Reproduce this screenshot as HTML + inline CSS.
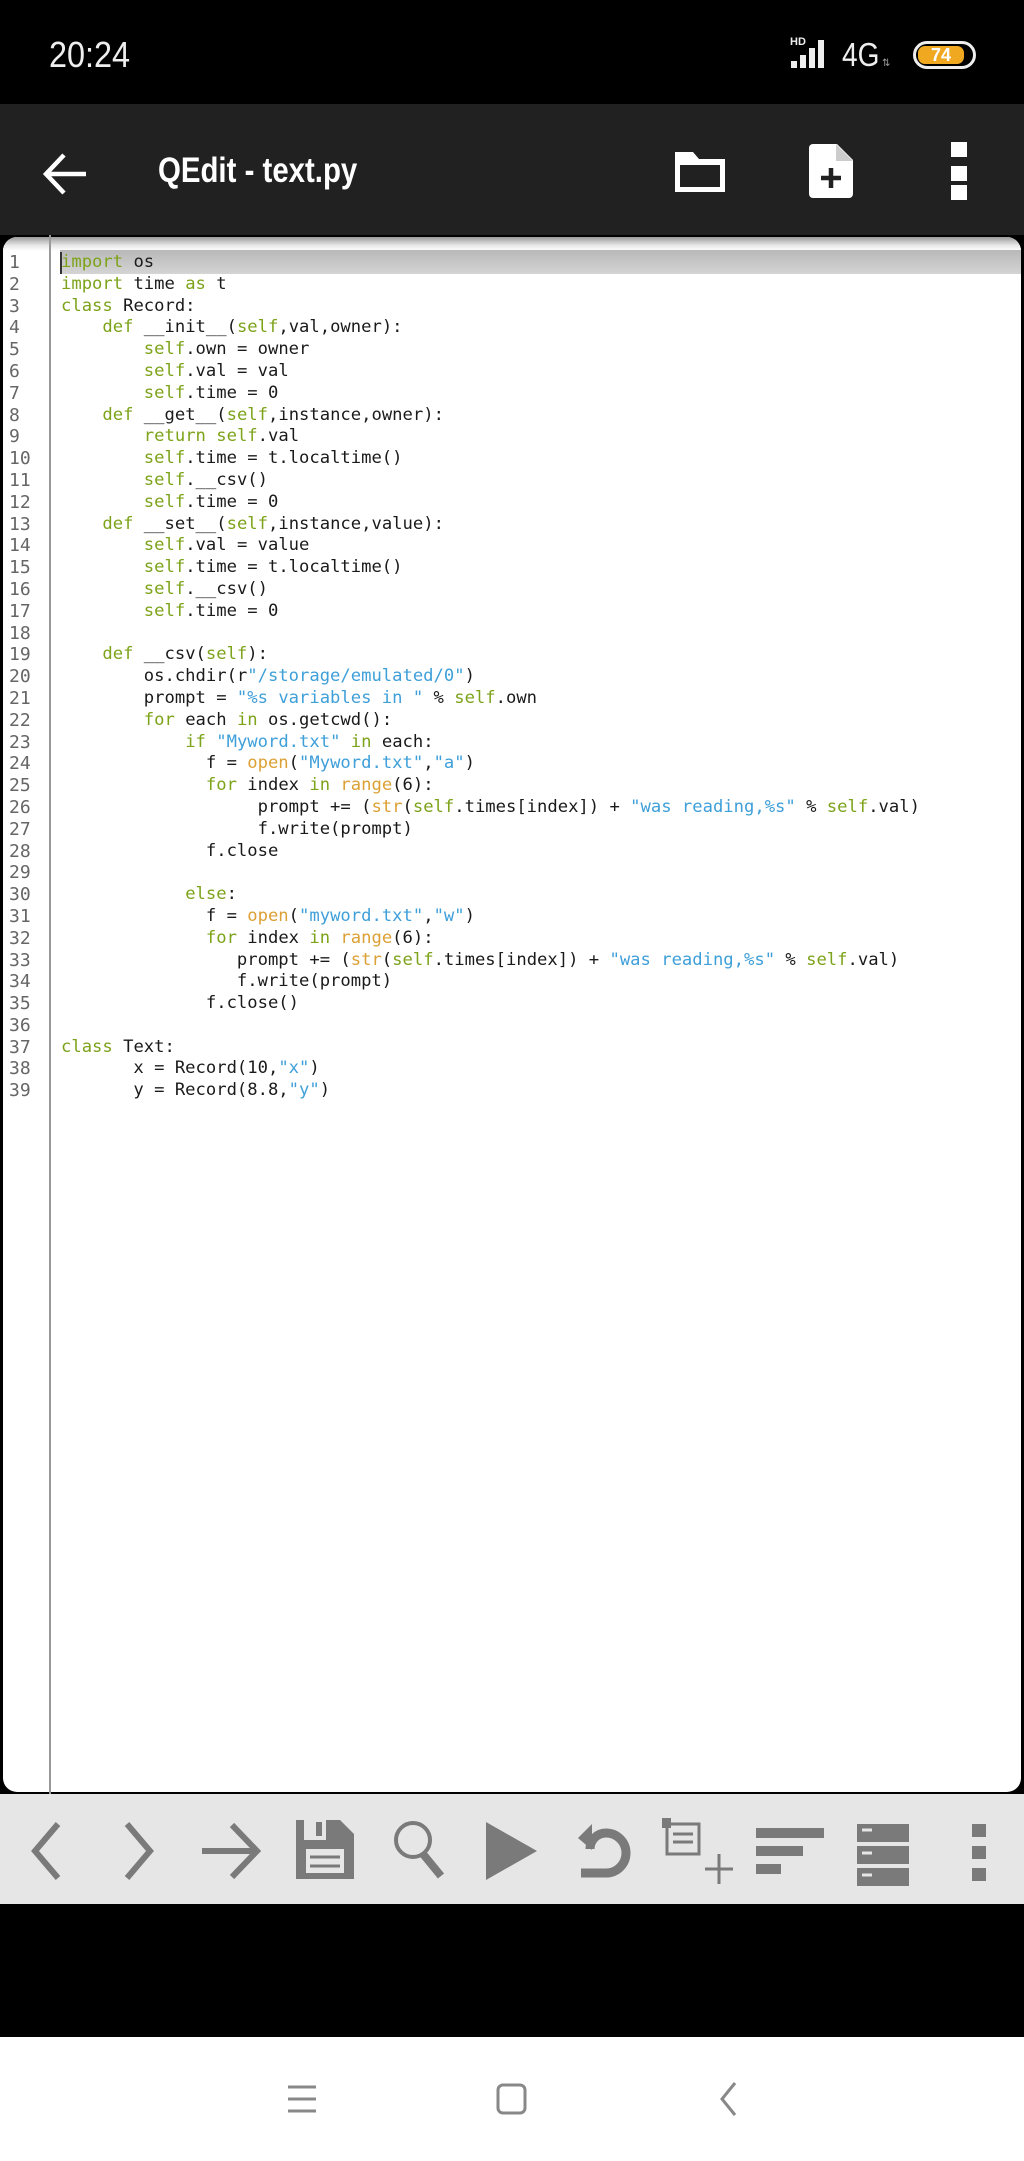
<!DOCTYPE html>
<html><head><meta charset="utf-8"><style>
*{margin:0;padding:0;box-sizing:border-box}
body{width:1024px;height:2161px;background:#000;position:relative;overflow:hidden;font-family:"Liberation Sans",sans-serif}
.abs{position:absolute}
#status{left:0;top:0;width:1024px;height:104px;background:#000}
#appbar{left:0;top:104px;width:1024px;height:131px;background:#212121}
#editor{left:0;top:235px;width:1024px;height:1559px;background:#000}
#paper{left:3px;top:2px;width:1018px;height:1555px;background:#fff;border-radius:14px;overflow:hidden}
#topgrad{left:0;top:0;width:100%;height:14px;background:linear-gradient(#9a9a9a,#e8e8e8 60%,#fff)}
#hl{left:57px;top:13px;width:970px;height:24px;background:linear-gradient(#b8b8b8,#d4d4d4)}
#gutterline{left:49px;top:235px;width:2px;height:1560px;background:#999}
pre{font-family:"DejaVu Sans Mono","Liberation Mono",monospace;font-size:17.2px;line-height:21.8px;letter-spacing:0}
#code{left:61px;top:252px;color:#1a1a1a}
#nums{left:9px;top:252px;color:#666;font-size:18px}
.k{color:#7da31a}.s{color:#3e9fd9}.b{color:#dca034}
#tool{left:0;top:1794px;width:1024px;height:110px;background:#e6e6e6}
#nav{left:0;top:2037px;width:1024px;height:124px;background:#fff}
</style></head><body>
<div id="status" class="abs">
 <div class="abs" style="left:49px;top:34px;color:#eee;font-size:36px;transform:scaleX(.9);transform-origin:left">20:24</div>
 <div class="abs" style="left:790px;top:36px;color:#eee;font-size:11px;font-weight:bold">HD</div>
 <svg class="abs" style="left:790px;top:38px" width="44" height="32"><g fill="#eee"><rect x="1" y="23" width="6" height="7"/><rect x="10" y="17" width="6" height="13"/><rect x="19" y="10" width="6" height="20"/><rect x="28" y="2" width="6" height="28"/></g></svg>
 <div class="abs" style="left:842px;top:36px;color:#eee;font-size:33px;transform:scaleX(.85);transform-origin:left">4G</div>
 <div class="abs" style="left:882px;top:58px;color:#999;font-size:10px">⇅</div>
 <div class="abs" style="left:913px;top:41px;width:63px;height:28px;border:3px solid #eee;border-radius:14px"></div>
 <div class="abs" style="left:918px;top:46px;width:46px;height:18px;background:#f0a820;border-radius:7px;color:#fff;font-size:18px;font-weight:bold;text-align:center;line-height:18px">74</div>
</div>
<div id="appbar" class="abs">
 <svg class="abs" style="left:40px;top:46px" width="50" height="50"><path d="M6 24H46M24 5L6 24L24 43" stroke="#fff" stroke-width="4.5" fill="none"/></svg>
 <div class="abs" style="left:158px;top:47px;color:#fff;font-size:35px;font-weight:bold;transform:scaleX(.84);transform-origin:left;white-space:nowrap">QEdit - text.py</div>
 <svg class="abs" style="left:675px;top:46px" width="50" height="42"><path d="M0 2h18l6 7h26v33H0z" fill="#fff"/><rect x="5" y="15" width="40" height="22" fill="#212121"/></svg>
 <svg class="abs" style="left:809px;top:40px" width="44" height="54"><path d="M4 0h24l16 16v34a4 4 0 0 1-4 4H4a4 4 0 0 1-4-4V4a4 4 0 0 1 4-4z" fill="#fff"/><path d="M27 0v17h17" fill="#ccc"/><path d="M22 24v20M12 34h20" stroke="#212121" stroke-width="4.5"/></svg>
 <div class="abs" style="left:951px;top:38px;width:16px;height:15px;background:#fff"></div>
 <div class="abs" style="left:951px;top:62px;width:16px;height:15px;background:#fff"></div>
 <div class="abs" style="left:951px;top:81px;width:16px;height:15px;background:#fff"></div>
</div>
<div id="editor" class="abs"><div id="paper" class="abs"><div id="topgrad" class="abs"></div><div id="hl" class="abs"></div></div></div>
<div id="gutterline" class="abs"></div>
<div class="abs" style="left:60px;top:252px;width:2px;height:22px;background:#333"></div>
<pre id="nums" class="abs">1
2
3
4
5
6
7
8
9
10
11
12
13
14
15
16
17
18
19
20
21
22
23
24
25
26
27
28
29
30
31
32
33
34
35
36
37
38
39</pre>
<pre id="code" class="abs"><span class="k">import</span> os
<span class="k">import</span> time <span class="k">as</span> t
<span class="k">class</span> Record:
    <span class="k">def</span> __init__(<span class="k">self</span>,val,owner):
        <span class="k">self</span>.own = owner
        <span class="k">self</span>.val = val
        <span class="k">self</span>.time = 0
    <span class="k">def</span> __get__(<span class="k">self</span>,instance,owner):
        <span class="k">return</span> <span class="k">self</span>.val
        <span class="k">self</span>.time = t.localtime()
        <span class="k">self</span>.__csv()
        <span class="k">self</span>.time = 0
    <span class="k">def</span> __set__(<span class="k">self</span>,instance,value):
        <span class="k">self</span>.val = value
        <span class="k">self</span>.time = t.localtime()
        <span class="k">self</span>.__csv()
        <span class="k">self</span>.time = 0

    <span class="k">def</span> __csv(<span class="k">self</span>):
        os.chdir(r<span class="s">"/storage/emulated/0"</span>)
        prompt = <span class="s">"%s variables in "</span> % <span class="k">self</span>.own
        <span class="k">for</span> each <span class="k">in</span> os.getcwd():
            <span class="k">if</span> <span class="s">"Myword.txt"</span> <span class="k">in</span> each:
              f = <span class="b">open</span>(<span class="s">"Myword.txt"</span>,<span class="s">"a"</span>)
              <span class="k">for</span> index <span class="k">in</span> <span class="b">range</span>(6):
                   prompt += (<span class="b">str</span>(<span class="k">self</span>.times[index]) + <span class="s">"was reading,%s"</span> % <span class="k">self</span>.val)
                   f.write(prompt)
              f.close

            <span class="k">else</span>:
              f = <span class="b">open</span>(<span class="s">"myword.txt"</span>,<span class="s">"w"</span>)
              <span class="k">for</span> index <span class="k">in</span> <span class="b">range</span>(6):
                 prompt += (<span class="b">str</span>(<span class="k">self</span>.times[index]) + <span class="s">"was reading,%s"</span> % <span class="k">self</span>.val)
                 f.write(prompt)
              f.close()

<span class="k">class</span> Text:
       x = Record(10,<span class="s">"x"</span>)
       y = Record(8.8,<span class="s">"y"</span>)</pre>
<div id="tool" class="abs">
 <svg class="abs" style="left:0;top:0" width="1024" height="110" fill="#7a7a7a" stroke="#7a7a7a">
  <path d="M58 30L35 57L58 84" fill="none" stroke-width="6"/>
  <path d="M127 30L150 57L127 84" fill="none" stroke-width="6"/>
  <path d="M202 57H257M232 31L257 57L232 83" fill="none" stroke-width="6"/>
  <path d="M296 26h44l14 14v45h-58z" stroke="none"/>
  <rect x="304" y="26" width="22" height="20" fill="#e6e6e6" stroke="none"/><rect x="316" y="28" width="6" height="14" stroke="none"/>
  <rect x="306" y="55" width="38" height="24" fill="#e6e6e6" stroke="none"/>
  <path d="M310 63h30M310 72h30" stroke-width="3"/>
  <circle cx="413" cy="46" r="17" fill="none" stroke-width="4"/>
  <path d="M423 60L441 82" stroke-width="8"/>
  <path d="M486 28L537 57L486 86z" stroke="none"/>
  <path d="M590 55a16 16 0 0 1 16-16h0a20 20 0 0 1 0 40h-25" fill="none" stroke-width="9"/>
  <path d="M578 44l14-14v26z" stroke="none"/>
  <rect x="662" y="24" width="9" height="10" stroke="none"/>
  <rect x="667" y="30" width="32" height="30" fill="none" stroke-width="3"/>
  <path d="M673 40h20M673 48h20" stroke-width="3"/>
  <path d="M719 60v30M705 75h28" stroke-width="3"/>
  <rect x="756" y="34" width="68" height="10" stroke="none"/><rect x="756" y="52" width="47" height="10" stroke="none"/><rect x="756" y="70" width="25" height="10" stroke="none"/>
  <rect x="857" y="30" width="52" height="18" stroke="none"/><rect x="857" y="52" width="52" height="18" stroke="none"/><rect x="857" y="74" width="52" height="18" stroke="none"/>
  <path d="M862 36h10M862 59h10M862 81h10" stroke="#e6e6e6" stroke-width="3"/>
  <rect x="972" y="30" width="14" height="13" stroke="none"/><rect x="972" y="52" width="14" height="13" stroke="none"/><rect x="972" y="74" width="14" height="13" stroke="none"/>
 </svg>
</div>
<div id="nav" class="abs">
 <svg class="abs" style="left:0;top:0" width="1024" height="124" fill="none" stroke="#888" stroke-width="3">
  <path d="M288 50h28M288 62h28M288 74h28"/>
  <rect x="498" y="48" width="27" height="28" rx="5"/>
  <path d="M735 46L722 62L735 78"/>
 </svg>
</div>
</body></html>
